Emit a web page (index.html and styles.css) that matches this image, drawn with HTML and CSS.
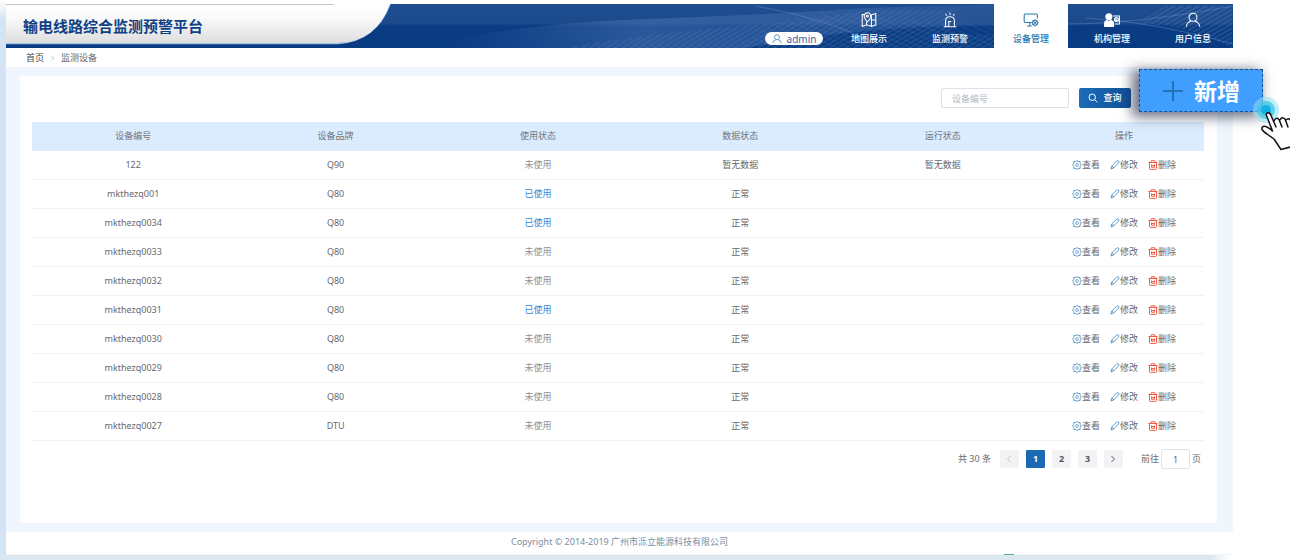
FILE: index.html
```html
<!DOCTYPE html>
<html lang="zh-CN">
<head>
<meta charset="utf-8">
<title>输电线路综合监测预警平台</title>
<link rel="stylesheet" href="styles.css">
</head>
<body>
<svg class="sprite" aria-hidden="true">
  <symbol id="gear" viewBox="0 0 20 20"><path d="M10 1.200l2.600 1.800h3.600v3.600L18.800 10l-2.600 3.400V17h-3.600L10 18.800 7.400 17H3.800v-3.600L1.200 10l2.600-3.400V3h3.600z"/><path d="M10 6.500l3.200 3.500-3.200 3.500L6.800 10z"/></symbol>
  <symbol id="pencil" viewBox="0 0 20 20"><path d="M2 18l1.500-6L13.500 2q2-1.500 3.600.2T17 6L7.500 15.800z M3.500 12l4 4"/></symbol>
  <symbol id="trash" viewBox="0 0 20 20"><path d="M1 5h18M5.500 5l1-3.500h7L14.500 5M3 5v12q0 1.800 1.800 1.800h10.400q1.800 0 1.800-1.800V5"/><path d="M7 9v5.500h6V9M7 11h6"/></symbol>
  <symbol id="user" viewBox="0 0 20 20"><circle cx="10" cy="6.500" r="5"/><path d="M1.500 18.500q.5-5.500 6-7M18.500 18.500q-.5-5.500-6-7"/></symbol>
</svg>
<div class="shell">
  <header class="header">
    <svg class="header-art" viewBox="0 0 1227 44" preserveAspectRatio="xMinYMin slice" aria-hidden="true">
      <defs>
        <linearGradient id="blue" x1="0" y1="0" x2="0" y2="1"><stop offset="0" stop-color="#1e4e91"/><stop offset=".44" stop-color="#1b4a8c"/><stop offset=".5" stop-color="#0b3c83"/><stop offset="1" stop-color="#083b82"/></linearGradient>
        <linearGradient id="haze" x1="0" y1="0" x2="1" y2="0"><stop offset="0" stop-color="#5b82c0" stop-opacity="0"/><stop offset=".35" stop-color="#5b82c0" stop-opacity=".4"/><stop offset=".6" stop-color="#5b82c0" stop-opacity=".3"/><stop offset="1" stop-color="#5b82c0" stop-opacity=".15"/></linearGradient>
        <linearGradient id="paper" x1="0" y1="0" x2="0" y2="1"><stop offset="0" stop-color="#fff"/><stop offset=".35" stop-color="#fafafa"/><stop offset="1" stop-color="#dedede"/></linearGradient>
        <pattern id="waves" width="7" height="4" patternUnits="userSpaceOnUse" patternTransform="rotate(-30)"><path d="M0 2h7" stroke="#8fb0de" stroke-width=".8"/></pattern>
        <pattern id="mesh" width="7" height="5" patternUnits="userSpaceOnUse" patternTransform="rotate(24)"><path d="M0 2h7" stroke="#7da0d4" stroke-width=".5"/></pattern>
      </defs>
      <rect width="1227" height="44" fill="url(#blue)"/>
      <path d="M440 36Q540 18 640 15T860 4L1000 0V22Q860 20 740 44H440z" fill="url(#haze)"/>
      <path d="M560 44Q660 26 790 18L860 6h90Q920 36 1000 30L1010 44z" fill="url(#waves)" opacity=".3"/>
      <path d="M730 44Q790 0 850 10T990 20V44z" fill="url(#mesh)" opacity=".3"/>
      <path d="M1130 20l30-18h66v42q-50-26-97-24z" fill="url(#waves)" opacity=".4"/>
      <path d="M1060 20Q1130 20 1227 2M1080 14q70 4 147 26M750 2q70 12 120 38" fill="none" stroke="#7da0d4" stroke-width=".6" opacity=".6"/>
      <path d="M0 39.500H332Q370 37 384 0" fill="none" stroke="#9fc4ec" stroke-width="1.500"/>
      <path d="M0 0H384Q370 38 332 39H0z" fill="url(#paper)"/>
      <path d="M0 .5H328" stroke="#c3c3c3"/>
    </svg>
    <h1 class="title">输电线路综合监测预警平台</h1>
    <button class="account" type="button"><svg class="ico account-ico"><use href="#user"/></svg>admin</button>
    <nav class="nav">
      <a class="tab" href="#map"><svg class="tab-ico" viewBox="0 0 20 20"><path d="M5 3H1.500v15L7 16l6 2 5.500-2V2L13 3.500M7 12v4M13 3.500V18M13 10h5.500"/><path d="M8 12Q3.500 7.500 4 4.500T8 1t4 3.500T8 12z"/><circle cx="8" cy="5" r="1.300"/></svg>地图展示</a>
      <a class="tab" href="#alarm"><svg class="tab-ico" viewBox="0 0 20 20"><path d="M2 18.500h16M4.500 18V11q0-5 5.500-5t5.500 5v7M8.500 18v-6h3M10 1v2.500M4.500 2.500L6 4.500M15.500 2.500L14 4.500"/></svg>监测预警</a>
      <a class="tab active" href="#device"><svg class="tab-ico" viewBox="0 0 20 20"><path d="M11 13H3q-1.500 0-1.500-1.500V4Q1.500 2.500 3 2.500h13.500Q18 2.500 18 4v4M5 17.500h6M8.500 13v4"/><circle cx="15" cy="13.500" r="3"/><circle cx="15" cy="13.500" r=".8"/><path d="M15 9v1.500M15 16.500V18M10.800 13.500H12M18 13.500h1.500M12 10.500l1 1M17 15.500l1 1M12 16.500l1-1M17 11.500l1-1"/></svg>设备管理</a>
      <a class="tab" href="#org"><svg class="tab-ico" viewBox="0 0 20 20"><circle cx="6" cy="6" r="3.800" fill="currentColor"/><path d="M.8 18v-4q0-3 3-3.500L6 12.500l2.500-2Q12 11 12 14.500V18z" fill="currentColor"/><path d="M11 5h8.300v10H13.500M14 8l3 4M17.500 7.500l-4 4"/><circle cx="15.500" cy="9.500" r="2.500"/></svg>机构管理</a>
      <a class="tab" href="#user-info"><svg class="tab-ico"><use href="#user"/></svg>用户信息</a>
    </nav>
  </header>

  <nav class="crumbs" aria-label="面包屑">
    <a class="crumb-home" href="#home">首页</a>
    <svg class="crumb-sep" viewBox="0 0 6 8"><path d="M1.500 1l3 3-3 3"/></svg>
    <span>监测设备</span>
  </nav>

  <main class="main">
    <section class="card">
      <form class="toolbar">
        <input class="search" type="text" placeholder="设备编号" aria-label="设备编号">
        <button class="query" type="button"><svg class="query-ico" viewBox="0 0 20 20"><circle cx="8.500" cy="8.500" r="6.500"/><path d="M13.500 13.500l5 5"/></svg>查询</button>
      </form>
      <table class="table">
        <colgroup><col span="5"><col class="col-ops"></colgroup>
        <thead><tr><th>设备编号</th><th>设备品牌</th><th>使用状态</th><th>数据状态</th><th>运行状态</th><th>操作</th></tr></thead>
        <tbody>
          <tr><td>122</td><td>Q90</td><td class="idle">未使用</td><td>暂无数据</td><td>暂无数据</td><td><div class="ops"><button type="button"><svg class="ico"><use href="#gear"/></svg>查看</button><button type="button"><svg class="ico"><use href="#pencil"/></svg>修改</button><button type="button"><svg class="ico del"><use href="#trash"/></svg>删除</button></div></td></tr>
          <tr><td>mkthezq001</td><td>Q80</td><td class="used">已使用</td><td>正常</td><td></td><td><div class="ops"><button type="button"><svg class="ico"><use href="#gear"/></svg>查看</button><button type="button"><svg class="ico"><use href="#pencil"/></svg>修改</button><button type="button"><svg class="ico del"><use href="#trash"/></svg>删除</button></div></td></tr>
          <tr><td>mkthezq0034</td><td>Q80</td><td class="used">已使用</td><td>正常</td><td></td><td><div class="ops"><button type="button"><svg class="ico"><use href="#gear"/></svg>查看</button><button type="button"><svg class="ico"><use href="#pencil"/></svg>修改</button><button type="button"><svg class="ico del"><use href="#trash"/></svg>删除</button></div></td></tr>
          <tr><td>mkthezq0033</td><td>Q80</td><td class="idle">未使用</td><td>正常</td><td></td><td><div class="ops"><button type="button"><svg class="ico"><use href="#gear"/></svg>查看</button><button type="button"><svg class="ico"><use href="#pencil"/></svg>修改</button><button type="button"><svg class="ico del"><use href="#trash"/></svg>删除</button></div></td></tr>
          <tr><td>mkthezq0032</td><td>Q80</td><td class="idle">未使用</td><td>正常</td><td></td><td><div class="ops"><button type="button"><svg class="ico"><use href="#gear"/></svg>查看</button><button type="button"><svg class="ico"><use href="#pencil"/></svg>修改</button><button type="button"><svg class="ico del"><use href="#trash"/></svg>删除</button></div></td></tr>
          <tr><td>mkthezq0031</td><td>Q80</td><td class="used">已使用</td><td>正常</td><td></td><td><div class="ops"><button type="button"><svg class="ico"><use href="#gear"/></svg>查看</button><button type="button"><svg class="ico"><use href="#pencil"/></svg>修改</button><button type="button"><svg class="ico del"><use href="#trash"/></svg>删除</button></div></td></tr>
          <tr><td>mkthezq0030</td><td>Q80</td><td class="idle">未使用</td><td>正常</td><td></td><td><div class="ops"><button type="button"><svg class="ico"><use href="#gear"/></svg>查看</button><button type="button"><svg class="ico"><use href="#pencil"/></svg>修改</button><button type="button"><svg class="ico del"><use href="#trash"/></svg>删除</button></div></td></tr>
          <tr><td>mkthezq0029</td><td>Q80</td><td class="idle">未使用</td><td>正常</td><td></td><td><div class="ops"><button type="button"><svg class="ico"><use href="#gear"/></svg>查看</button><button type="button"><svg class="ico"><use href="#pencil"/></svg>修改</button><button type="button"><svg class="ico del"><use href="#trash"/></svg>删除</button></div></td></tr>
          <tr><td>mkthezq0028</td><td>Q80</td><td class="idle">未使用</td><td>正常</td><td></td><td><div class="ops"><button type="button"><svg class="ico"><use href="#gear"/></svg>查看</button><button type="button"><svg class="ico"><use href="#pencil"/></svg>修改</button><button type="button"><svg class="ico del"><use href="#trash"/></svg>删除</button></div></td></tr>
          <tr><td>mkthezq0027</td><td>DTU</td><td class="idle">未使用</td><td>正常</td><td></td><td><div class="ops"><button type="button"><svg class="ico"><use href="#gear"/></svg>查看</button><button type="button"><svg class="ico"><use href="#pencil"/></svg>修改</button><button type="button"><svg class="ico del"><use href="#trash"/></svg>删除</button></div></td></tr>
        </tbody>
      </table>
      <div class="pager">
        <span class="total">共 30 条</span>
        <div class="pages">
          <button class="page" type="button" disabled aria-label="上一页"><svg class="arrow" viewBox="0 0 6 8"><path d="M4.500 1l-3 3 3 3"/></svg></button>
          <button class="page current" type="button">1</button>
          <button class="page" type="button">2</button>
          <button class="page" type="button">3</button>
          <button class="page" type="button" aria-label="下一页"><svg class="arrow" viewBox="0 0 6 8"><path d="M1.500 1l3 3-3 3"/></svg></button>
        </div>
        <label class="jump">前往<input class="jump-input" type="text" value="1">页</label>
      </div>
      <button class="add" type="button"><svg class="add-ico" viewBox="0 0 22 22"><path d="M11 1v20M1 11h20"/></svg>新增</button>
      <svg class="pointer" viewBox="0 0 48 56" aria-hidden="true">
        <circle cx="14" cy="14" r="13" fill="#8fe0f3" opacity=".55"/><circle cx="14" cy="14" r="9" fill="#3fc4e8" opacity=".75"/><circle cx="14" cy="14" r="5" fill="#12b2e4"/>
        <path d="M23 39L14.500 18.500Q14 16 16 16.500T19 19L23 26Q24 22 27 24L29 27Q30 22 33 24L35 28Q36 23 39 26L46 39L44 50L29 53.500L23 43L11 33Q9 30 12 29.500T20 33z" fill="#fff"/>
        <path d="M20.500 35L14.500 19.500Q14 16.500 16.200 16.700T19 19.500L24 31M22 25Q24 20.500 27 23.500L30 31M28 24Q30 20 33 23L36 31M34 24Q37 21 39 25L43 36M20.500 35Q13 28.500 10.500 31T15 38L22 43L29 53.500L44 49.500" fill="none" stroke="#111" stroke-width="1.500" stroke-linejoin="round" stroke-linecap="round"/>
      </svg>
    </section>
  </main>
  <footer class="footer">Copyright © 2014-2019 广州市泺立能源科技有限公司<span class="marker"></span></footer>
</div>
</body>
</html>
```

FILE: styles.css
```css
* { box-sizing: border-box; }
body {
  margin: 0;
  min-height: 100vh;
  padding: 4px 57px 5px 6px;
  overflow: hidden;
  background:
    linear-gradient(90deg, #dbe8f2 calc(100% - 80px), #fff calc(100% - 60px)) bottom / 100% 5px no-repeat,
    linear-gradient(#fff, #d5e4f5 20px) left / 6px 100% no-repeat,
    #fff;
  color: #666a70;
  font: 9px/12px "Noto Sans", "Noto Sans CJK SC", sans-serif;
  display: flex;
}
button, input { font: inherit; color: inherit; margin: 0; }
button { border: 0; padding: 0; background: none; cursor: pointer; }
a { color: inherit; text-decoration: none; }
svg { fill: none; stroke: currentColor; }
.sprite { position: absolute; width: 0; height: 0; }
.shell { flex: 1; min-width: 0; display: flex; flex-direction: column; background: #fff; }

.header { position: relative; height: 44px; display: flex; align-items: stretch; padding: 0 3px 0 17px; }
.header-art { position: absolute; inset: 0; width: 100%; height: 100%; stroke: none; }
.header > :not(.header-art) { position: relative; }
.title { margin: 0 auto 0 0; align-self: center; color: #0f3f85; font-size: 15px; line-height: 20px; font-weight: 700; }
.account {
  align-self: flex-end; display: flex; align-items: center; justify-content: center; gap: 5px;
  width: 58px; height: 13px; margin: 0 9px 3px 0; border-radius: 7px;
  background: #fff; color: #3c5f95; font-size: 10px;
}
.account-ico { color: #274b83; }
.nav { display: flex; gap: 7px; }
.tab { width: 74px; display: flex; flex-direction: column; align-items: center; gap: 5px; padding-top: 8px; color: #fff; font-weight: 500; }
.tab.active { background: #fff; color: #2b76ad; }
.tab-ico { width: 16px; height: 16px; stroke-width: 1.3; }
.tab-ico use, .account-ico use { width: 100%; height: 100%; }

.crumbs { display: flex; align-items: center; gap: 6px; height: 19px; padding-left: 20px; }
.crumb-home { color: #44474c; }
.crumb-sep { width: 5px; height: 8px; color: #b4b8bf; }

.main { flex: 1; padding: 9px 16px 9px 14px; background: #eff6fe; display: flex; }
.card { position: relative; flex: 1; min-width: 0; padding: 12px 13px 0 12px; background: #fff; }
.toolbar { display: flex; justify-content: flex-end; gap: 10px; padding-right: 73px; margin-bottom: 14px; }
.search { width: 128px; height: 20px; border: 1px solid #dde1e8; border-radius: 2px; padding: 0 10px; background: #fff; }
.search::placeholder { color: #b5b9c2; opacity: 1; }
.query {
  width: 52px; height: 20px; display: flex; align-items: center; justify-content: center; gap: 5px;
  border-radius: 2px; background: linear-gradient(90deg, #1c6cb7, #12509a); color: #fff; font-weight: 500;
}
.query-ico { width: 10px; height: 10px; stroke-width: 2; }

.table { width: 100%; border-collapse: separate; border-spacing: 0; table-layout: fixed; text-align: center; }
.col-ops { width: 160px; }
.table th, .table td { height: 29px; padding: 0; font-weight: 400; border-bottom: 1px solid #eff1f5; }
.table th { background: #daecfd; border-bottom-color: #daecfd; color: #71767d; }
.table .idle { color: #8d9199; }
.table .used { color: #2f87da; }
.ops { display: flex; justify-content: center; gap: 10px; }
.ops button { display: flex; align-items: center; }
.ico { width: 10px; height: 10px; color: #3b83bd; stroke-width: 1.6; }
.ico.del { color: #ee5b48; stroke-width: 2; }

.pager { display: flex; align-items: center; justify-content: flex-end; margin-top: 8px; padding-right: 3px; }
.total { margin-right: 9px; }
.pages { display: flex; gap: 7px; margin-right: 18px; }
.page { width: 19px; height: 18px; display: grid; place-items: center; background: #f3f3f5; color: #55585e; font-weight: 700; border-radius: 1px; }
.page.current { background: #1b69b3; color: #fff; }
.page:disabled { color: #c0c4cc; }
.arrow { width: 6px; height: 8px; }
.jump { display: flex; align-items: center; gap: 2px; }
.jump-input { width: 29px; height: 20px; padding: 0; text-align: center; border: 1px solid #e0e3e9; border-radius: 2px; }

.add {
  position: absolute; top: -7px; right: -46px; width: 124px; height: 43px;
  display: flex; align-items: center; justify-content: center; gap: 10px;
  border: 1px dashed #1d4f87; background: #409eff; color: #fff; font-size: 23px; line-height: 28px; font-weight: 700;
  box-shadow: -5px 3px 12px 2px rgba(25, 35, 65, .65);
}
.add-ico { width: 22px; height: 22px; color: #2571b8; stroke-width: 2; }
.pointer { position: absolute; top: 20px; right: -83px; width: 48px; height: 56px; stroke: none; }

.footer { position: relative; height: 23px; padding-top: 4px; text-align: center; color: #7b8da3; border-bottom: 1px solid #f1f3f5; }
.marker { position: absolute; right: 219px; bottom: -1px; width: 10px; height: 1px; background: #4bb489; }
```
